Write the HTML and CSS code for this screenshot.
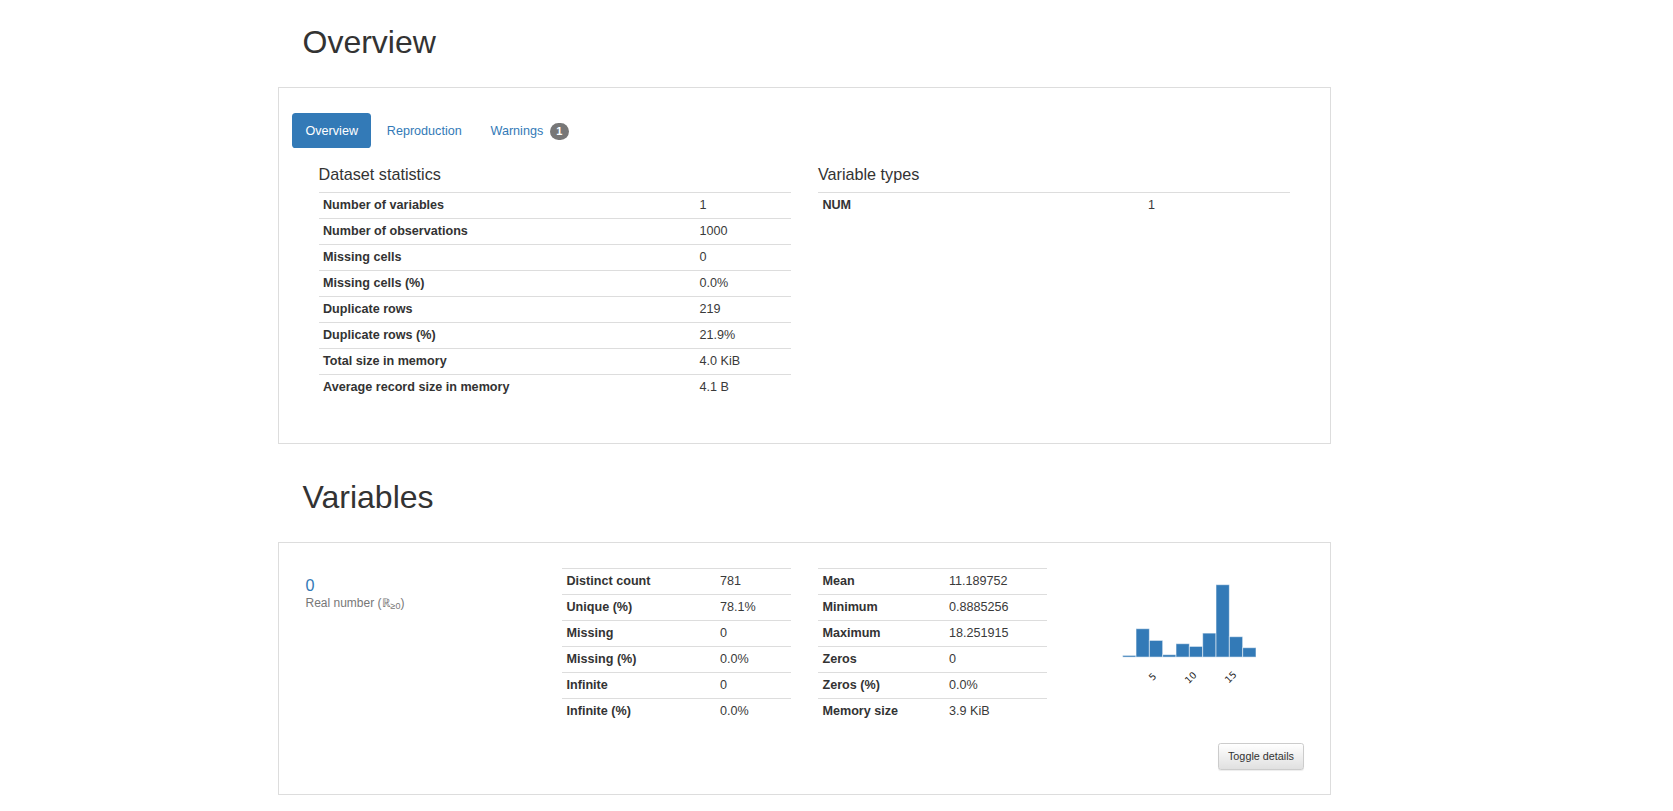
FILE: index.html
```html
<!DOCTYPE html>
<html lang="en">
<head>
<meta charset="utf-8">
<title>Profile report</title>
<link rel="stylesheet" href="styles.css">
</head>
<body>
<div class="page">
  <h1 class="section-title first">Overview</h1>
  <div class="panel panel-overview">
    <ul class="tabs">
      <li class="tab active"><a>Overview</a></li>
      <li class="tab"><a>Reproduction</a></li>
      <li class="tab"><a>Warnings <span class="badge">1</span></a></li>
    </ul>
    <div class="stats-row">
      <div class="stats-col">
        <h4 class="sub-title">Dataset statistics</h4>
        <table class="stats stats-ds">
          <tr><th>Number of variables</th><td>1</td></tr>
          <tr><th>Number of observations</th><td>1000</td></tr>
          <tr><th>Missing cells</th><td>0</td></tr>
          <tr><th>Missing cells (%)</th><td>0.0%</td></tr>
          <tr><th>Duplicate rows</th><td>219</td></tr>
          <tr><th>Duplicate rows (%)</th><td>21.9%</td></tr>
          <tr><th>Total size in memory</th><td>4.0 KiB</td></tr>
          <tr><th>Average record size in memory</th><td>4.1 B</td></tr>
        </table>
      </div>
      <div class="stats-col">
        <h4 class="sub-title">Variable types</h4>
        <table class="stats stats-vt">
          <tr><th>NUM</th><td>1</td></tr>
        </table>
      </div>
    </div>
  </div>

  <h1 class="section-title second">Variables</h1>
  <div class="panel panel-var">
    <div class="var-row">
      <div class="var-name">
        <p class="var-link">0</p>
        <p class="var-type">Real number (ℝ<sub>≥0</sub>)</p>
      </div>
      <table class="stats stats-a">
        <tr><th>Distinct count</th><td>781</td></tr>
        <tr><th>Unique (%)</th><td>78.1%</td></tr>
        <tr><th>Missing</th><td>0</td></tr>
        <tr><th>Missing (%)</th><td>0.0%</td></tr>
        <tr><th>Infinite</th><td>0</td></tr>
        <tr><th>Infinite (%)</th><td>0.0%</td></tr>
      </table>
      <table class="stats stats-b">
        <tr><th>Mean</th><td>11.189752</td></tr>
        <tr><th>Minimum</th><td>0.8885256</td></tr>
        <tr><th>Maximum</th><td>18.251915</td></tr>
        <tr><th>Zeros</th><td>0</td></tr>
        <tr><th>Zeros (%)</th><td>0.0%</td></tr>
        <tr><th>Memory size</th><td>3.9 KiB</td></tr>
      </table>
      <div class="var-hist">
        <svg class="hist" width="256" height="120" viewBox="0 0 256 120">
          <g fill="#337ab7" stroke="#ffffff" stroke-opacity="0.55" stroke-width="1">
            <rect x="75.7" y="87.4" width="13.33" height="1.7"/>
            <rect x="89.03" y="60.7" width="13.33" height="28.4"/>
            <rect x="102.36" y="72.4" width="13.33" height="16.7"/>
            <rect x="115.69" y="86.7" width="13.33" height="2.4"/>
            <rect x="129.02" y="75.7" width="13.33" height="13.4"/>
            <rect x="142.35" y="78.4" width="13.33" height="10.7"/>
            <rect x="155.68" y="65.1" width="13.33" height="24"/>
            <rect x="169.01" y="16.7" width="13.33" height="72.4"/>
            <rect x="182.34" y="68.7" width="13.33" height="20.4"/>
            <rect x="195.67" y="79.7" width="13.33" height="9.4"/>
          </g>
          <g class="ticks" font-size="9.5" fill="#262626" text-anchor="middle">
            <text transform="translate(108 111) rotate(-45)">5</text>
            <text transform="translate(146 112) rotate(-45)">10</text>
            <text transform="translate(186 111.5) rotate(-45)">15</text>
          </g>
        </svg>
      </div>
    </div>
    <div class="btn-row">
      <button class="btn-toggle" type="button">Toggle details</button>
    </div>
  </div>
</div>
</body>
</html>
```

FILE: styles.css
```css
* { box-sizing: border-box; }

body {
  margin: 0;
  background: #ffffff;
  color: #333333;
  font-family: "Liberation Sans", Arial, Helvetica, sans-serif;
  font-size: 12.6px;
  line-height: 18px;
}

.page {
  width: 1053px;
  margin-left: 278px;
}

.section-title {
  margin: 0;
  padding-left: 24.5px;
  font-size: 32px;
  line-height: 35px;
  font-weight: normal;
  color: #333333;
}

.section-title.first {
  margin-top: 25px;
  margin-bottom: 27px;
}

.section-title.second {
  margin-top: 36px;
  margin-bottom: 27px;
}

.panel {
  border: 1px solid #dddddd;
  background: #ffffff;
}

/* Overview panel */
.panel-overview {
  padding: 25px 0 43px 13px;
}

.tabs {
  list-style: none;
  margin: 0;
  padding: 0;
  display: flex;
}

.tab + .tab {
  margin-left: 1.8px;
}

.tab a {
  display: block;
  padding: 8.5px 13.5px;
  line-height: 18px;
  font-size: 12.6px;
  color: #337ab7;
  border-radius: 3.6px;
}

.tab.active a {
  background: #337ab7;
  color: #ffffff;
}

.badge {
  display: inline-block;
  min-width: 9px;
  padding: 3px 6.6px;
  margin-left: 3px;
  font-size: 11px;
  font-weight: bold;
  line-height: 1;
  color: #ffffff;
  text-align: center;
  vertical-align: 0;
  background: #777777;
  border-radius: 9px;
}

.stats-row {
  display: flex;
  gap: 27.4px;
  padding-left: 26.5px;
  margin-top: 17px;
}

.stats-col {
  width: 472px;
}

.sub-title {
  margin: 0 0 9px 0;
  font-size: 16.2px;
  line-height: 18px;
  font-weight: normal;
  color: #333333;
}

.stats {
  border-collapse: separate;
  border-spacing: 0;
  table-layout: fixed;
  font-size: 12.6px;
}

.stats th,
.stats td {
  border-top: 1px solid #dddddd;
  padding: 4px 4.5px;
  line-height: 17px;
  text-align: left;
  vertical-align: top;
  white-space: nowrap;
}

.stats th {
  font-weight: bold;
  color: #333333;
}

.stats td {
  font-weight: normal;
  color: #3a3a3a;
}

.stats-ds { width: 472px; }
.stats-ds th { width: 376.5px; }

.stats-vt { width: 472px; }
.stats-vt th { width: 325.5px; }

/* Variables panel */
.panel-var {
  padding: 25px 26px 24.5px 26.5px;
}

.var-row {
  display: flex;
  align-items: flex-start;
}

.var-name {
  width: 256.5px;
  flex: none;
  padding-top: 8px;
}

.var-link {
  margin: 0;
  font-size: 16.2px;
  line-height: 18px;
  color: #337ab7;
}

.var-type {
  margin: 1px 0 0 0;
  font-size: 12px;
  line-height: 16px;
  color: #777777;
}

.var-type sub {
  font-size: 9px;
  line-height: 0;
  vertical-align: -2px;
}

.stats-a {
  width: 228.6px;
  flex: none;
}
.stats-a th { width: 153.5px; }

.stats-b {
  width: 229px;
  flex: none;
  margin-left: 27.4px;
}
.stats-b th { width: 126.5px; }

.var-hist {
  flex: 1;
}

.hist {
  display: block;
}

.ticks text {
  font-family: "DejaVu Sans", "Liberation Sans", sans-serif;
}

.btn-row {
  display: flex;
  justify-content: flex-end;
  margin-top: 18.5px;
}

.btn-toggle {
  font-family: "Liberation Sans", Arial, sans-serif;
  font-size: 10.8px;
  line-height: 16.2px;
  padding: 4.5px 9px;
  color: #333333;
  background: linear-gradient(to bottom, #ffffff 0%, #e0e0e0 100%);
  border: 1px solid #cccccc;
  border-radius: 2.7px;
  box-shadow: inset 0 1px 0 rgba(255, 255, 255, 0.15), 0 1px 1px rgba(0, 0, 0, 0.075);
  cursor: pointer;
}
```
